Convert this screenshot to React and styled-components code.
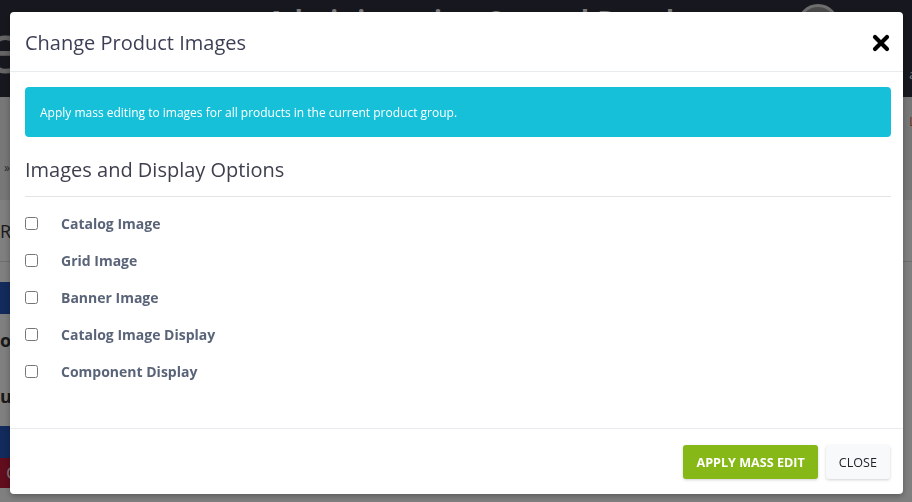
import styled, { createGlobalStyle } from 'styled-components';

const GlobalStyle = createGlobalStyle`
  html, body {
    margin: 0;
    padding: 0;
    width: 912px;
    height: 502px;
    overflow: hidden;
    font-family: "Open Sans", "Liberation Sans", sans-serif;
  }
  * { box-sizing: border-box; }
`;

const Page = styled.div`
  width: 912px;
  height: 502px;
  background: #fff;
  overflow: hidden;
`;

const TopBar = styled.header`
  height: 97px;
  background: #2f2f3e;
  display: flex;
  align-items: flex-start;
  justify-content: space-between;
  color: #fff;
`;

const Logo = styled.div`
  font-size: 70px;
  line-height: 70px;
  color: #c8c8c8;
  margin-left: -14px;
  margin-top: 14px;
  font-family: "Liberation Sans", sans-serif;
`;

const SiteTitle = styled.div`
  font-size: 26px;
  font-weight: 700;
  margin-top: 2px;
  margin-left: 120px;
  letter-spacing: 1px;
`;

const UserBox = styled.div`
  display: flex;
`;

const Avatar = styled.div`
  width: 42px;
  height: 42px;
  border-radius: 50%;
  background: #999;
  border: 3px solid #ddd;
  margin-top: 4px;
  margin-right: 70px;
`;

const UserInfo = styled.div`
  display: flex;
  flex-direction: column;
  font-size: 12px;
  gap: 30px;
  padding-top: 66px;
  margin-right: -4px;
  & span:last-child { color: #e0603a; }
`;

const Crumbs = styled.div`
  height: 103px;
  background: #efefef;
  font-size: 12px;
  padding: 62px 0 0 4px;
  color: #555;
`;

const Content = styled.div`
  display: flex;
  flex-direction: column;
  font-size: 18px;
  color: #333;
`;

const ContentRow = styled.div`
  height: ${p => p.$h}px;
  border-bottom: ${p => (p.$line ? '1px solid #ddd' : 'none')};
  display: flex;
  align-items: center;
  font-weight: ${p => (p.$bold ? 700 : 400)};
`;

const SideButton = styled.div`
  width: ${p => p.$w}px;
  height: ${p => p.$h}px;
  background: ${p => p.$bg};
  color: #fff;
  font-size: 16px;
  display: flex;
  align-items: center;
  justify-content: flex-end;
  overflow: hidden;
`;

const Backdrop = styled.div`
  position: fixed;
  inset: 0;
  background: rgba(0, 0, 0, 0.5);
`;

const Modal = styled.div`
  position: fixed;
  top: 12px;
  left: 10px;
  width: 893px;
  height: 482px;
  background: #fff;
  border-radius: 4px;
  display: flex;
  flex-direction: column;
  box-shadow: 0 2px 6px rgba(0, 0, 0, 0.3);
`;

const ModalHeader = styled.div`
  height: 60px;
  display: flex;
  align-items: center;
  justify-content: space-between;
  padding: 2px 13px 0 15px;
  border-bottom: 1px solid #e9ecef;
`;

const ModalTitle = styled.h5`
  margin: 0;
  font-size: 20px;
  font-weight: 400;
  color: #3d3f55;
`;

const CloseX = styled.button`
  border: none;
  background: none;
  padding: 0;
  width: 18px;
  height: 18px;
  display: flex;
  cursor: pointer;
`;

const ModalBody = styled.div`
  flex: 1;
  padding: 15px 12px 0 15px;
`;

const Alert = styled.div`
  background: #17c0d9;
  color: #fff;
  border-radius: 4px;
  height: 50px;
  padding: 0 15px;
  display: flex;
  align-items: center;
  font-size: 12px;
`;

const SectionTitle = styled.h4`
  margin: 19px 0 0;
  font-size: 20px;
  font-weight: 400;
  color: #3d3f4d;
  padding-bottom: 13px;
  border-bottom: 1px solid #e3e3e3;
`;

const OptionList = styled.div`
  display: flex;
  flex-direction: column;
  padding-top: 8px;
`;

const Option = styled.label`
  height: 37px;
  display: flex;
  align-items: center;
  font-size: 14px;
  font-weight: 700;
  color: #5a6478;
  cursor: pointer;
`;

const Box = styled.input`
  width: 13px;
  height: 13px;
  margin: 0 23px 0 0;
`;

const ModalFooter = styled.div`
  height: 66px;
  border-top: 1px solid #e9ecef;
  display: flex;
  align-items: center;
  justify-content: flex-end;
  gap: 8px;
  padding: 1px 13px 0 0;
`;

const Button = styled.button`
  height: 34px;
  padding: 0 ${p => p.$px}px;
  border: none;
  border-radius: 3px;
  font-family: "Open Sans", "Liberation Sans", sans-serif;
  font-size: 12.6px;
  font-weight: ${p => (p.$primary ? 700 : 400)};
  background: ${p => (p.$primary ? '#86b817' : '#f8f9fa')};
  color: ${p => (p.$primary ? '#fff' : '#212529')};
  box-shadow: 0 1px 3px rgba(0, 0, 0, 0.18);
  cursor: pointer;
`;

const options = [
  'Catalog Image',
  'Grid Image',
  'Banner Image',
  'Catalog Image Display',
  'Component Display',
];

export default function App() {
  return (
    <>
      <GlobalStyle />
      <Page>
        <TopBar>
          <Logo>e</Logo>
          <SiteTitle>Administration Control Panel</SiteTitle>
          <UserBox>
            <Avatar />
            <UserInfo>
              <span>a</span>
              <span>L</span>
            </UserInfo>
          </UserBox>
        </TopBar>
        <Crumbs>»</Crumbs>
        <Content>
          <ContentRow $h={62} $line>RO</ContentRow>
          <ContentRow $h={20} />
          <SideButton $w={40} $h={32} $bg="#2456b8">IO</SideButton>
          <ContentRow $h={52} $bold>o:</ContentRow>
          <ContentRow $h={60} $bold>u</ContentRow>
          <SideButton $w={40} $h={32} $bg="#2456b8">RO</SideButton>
          <SideButton $w={40} $h={30} $bg="#c21a3a">OUP</SideButton>
        </Content>
      </Page>
      <Backdrop />
      <Modal>
        <ModalHeader>
          <ModalTitle>Change Product Images</ModalTitle>
          <CloseX aria-label="Close">
            <svg width="18" height="18" viewBox="0 0 18 18">
              <path d="M3 3 L15 15 M15 3 L3 15" stroke="#000" strokeWidth="4.2" strokeLinecap="round" />
            </svg>
          </CloseX>
        </ModalHeader>
        <ModalBody>
          <Alert>Apply mass editing to images for all products in the current product group.</Alert>
          <SectionTitle>Images and Display Options</SectionTitle>
          <OptionList>
            {options.map(o => (
              <Option key={o}>
                <Box type="checkbox" />
                {o}
              </Option>
            ))}
          </OptionList>
        </ModalBody>
        <ModalFooter>
          <Button $primary $px={13}>APPLY MASS EDIT</Button>
          <Button $px={13}>CLOSE</Button>
        </ModalFooter>
      </Modal>
    </>
  );
}
